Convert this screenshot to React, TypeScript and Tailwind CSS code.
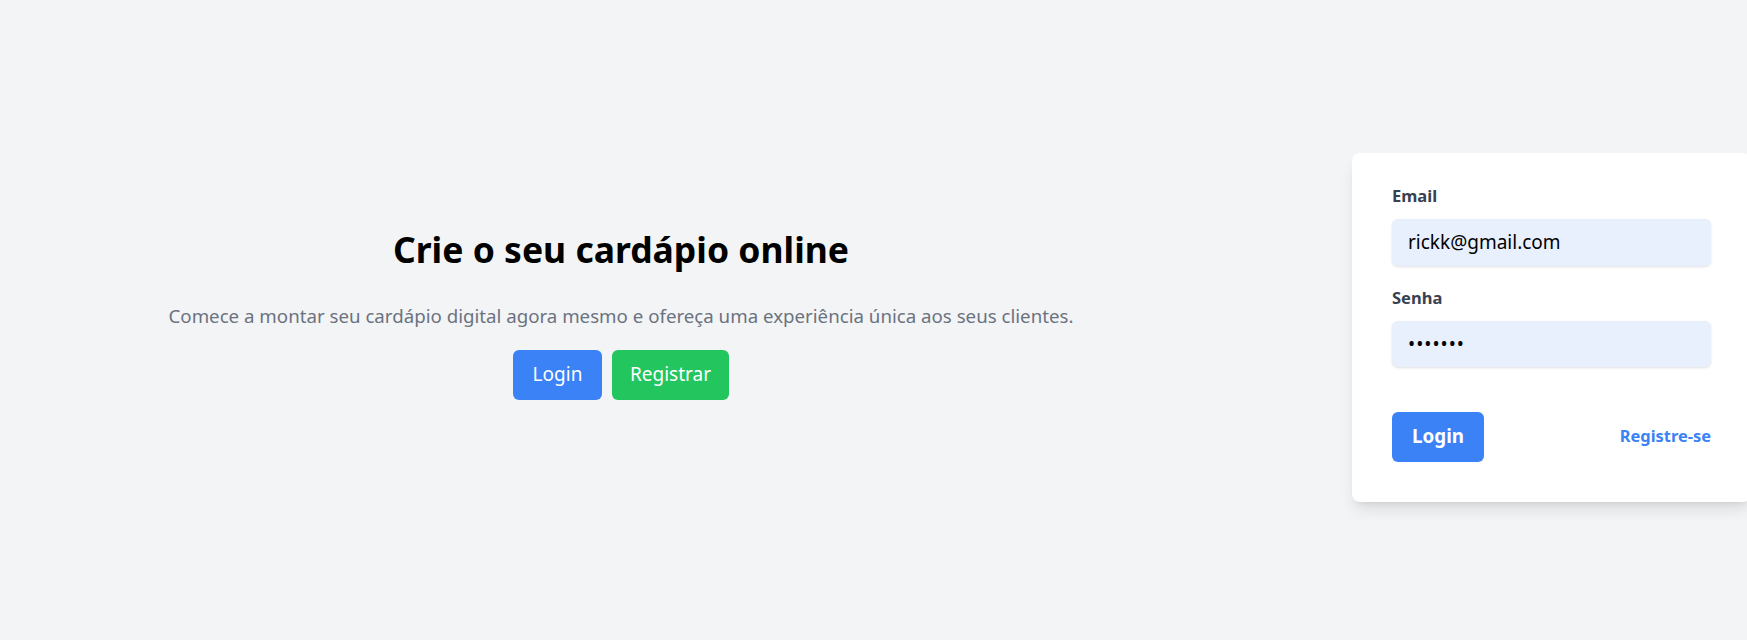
import React, { useState } from 'react';

const App: React.FC = () => {
  const [email, setEmail] = useState('rickk@gmail.com');
  const [senha, setSenha] = useState('1234567');

  return (
    <div className="min-h-screen w-full overflow-hidden bg-[#f3f4f6] font-['Noto_Sans',sans-serif]">
      <div className="flex h-[640px] items-center">
        {/* Hero */}
        <div className="mb-[12px] flex w-[1242px] shrink-0 flex-col items-center text-center">
          <h1 className="text-[35.5px] font-bold leading-10 text-black">Crie o seu cardápio online</h1>
          <p className="mt-[33px] text-[18.7px] leading-7 text-[#6b7280]">
            Comece a montar seu cardápio digital agora mesmo e ofereça uma experiência única aos seus clientes.
          </p>
          <div className="mt-[20px] flex gap-[10px]">
            <button className="h-[50px] w-[89px] rounded-md bg-[#3b82f6] text-[19px] text-white">Login</button>
            <button className="h-[50px] w-[117px] rounded-md bg-[#22c55e] text-[19px] text-white">Registrar</button>
          </div>
        </div>

        {/* Login card */}
        <div className="mt-[14px] ml-[110px] w-[399px] shrink-0 rounded-lg bg-white px-10 pt-[31px] pb-10 shadow-lg">
          <form onSubmit={(e) => e.preventDefault()}>
            <label className="block text-[16.5px] font-bold leading-6 text-[#374151]">Email</label>
            <input
              type="email"
              value={email}
              onChange={(e) => setEmail(e.target.value)}
              className="mt-[11px] block h-[47px] w-full rounded-md bg-[#e8f0fe] px-4 text-[19px] text-black shadow-sm outline-none"
            />
            <label className="mt-[20px] block text-[16.5px] font-bold leading-6 text-[#374151]">Senha</label>
            <input
              type="password"
              value={senha}
              onChange={(e) => setSenha(e.target.value)}
              className="mt-[11px] block h-[46px] w-full rounded-md bg-[#e8f0fe] px-4 text-[19px] tracking-[1px] text-black shadow-sm outline-none"
            />
            <div className="mt-[45px] flex items-center justify-between">
              <button type="submit" className="h-[50px] w-[92px] rounded-md bg-[#3b82f6] text-[18.8px] font-bold text-white">
                Login
              </button>
              <a href="#" className="text-[16.4px] font-bold text-[#3b82f6]">Registre-se</a>
            </div>
          </form>
        </div>
      </div>
    </div>
  );
};

export default App;
